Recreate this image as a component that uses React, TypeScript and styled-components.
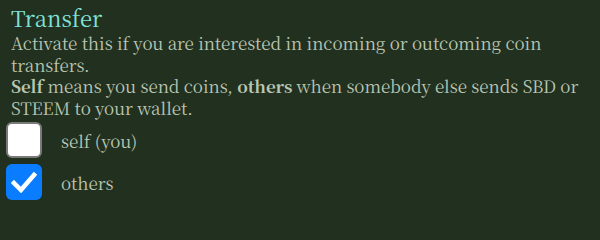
import styled, { createGlobalStyle } from "styled-components";

const GlobalStyle = createGlobalStyle`
  html, body {
    margin: 0;
    padding: 0;
    background: #22301f;
  }
`;

const options = [
  { id: "self", label: "self (you)", checked: false },
  { id: "others", label: "others", checked: true },
];

const CheckIcon = () => (
  <svg width="26" height="22" viewBox="0 0 26 22">
    <path
      d="M3 12 L10 19 L23 4"
      fill="none"
      stroke="#ffffff"
      strokeWidth="4.5"
      strokeLinecap="square"
    />
  </svg>
);

const App = () => {
  return (
    <Page>
      <GlobalStyle />
      <Title>Transfer</Title>
      <Description>
        Activate this if you are interested in incoming or outcoming coin
        transfers.
        <br />
        <b>Self</b> means you send coins, <b>others</b> when somebody else sends
        SBD or STEEM to your wallet.
      </Description>
      <OptionList>
        {options.map((option) => (
          <Option key={option.id}>
            <Box $checked={option.checked}>
              {option.checked && <CheckIcon />}
            </Box>
            <Label>{option.label}</Label>
          </Option>
        ))}
      </OptionList>
    </Page>
  );
};

export default App;

const Page = styled.div`
  width: 600px;
  height: 213px;
  box-sizing: border-box;
  padding: 4px 4px 0 11px;
  background: #22301f;
  font-family: "Noto Serif CJK SC", "Liberation Serif", serif;
  overflow: hidden;
`;

const Title = styled.div`
  color: #7fe3da;
  font-size: 22px;
  line-height: 28px;
`;

const Description = styled.div`
  width: 585px;
  color: #b9c6b3;
  font-size: 17px;
  letter-spacing: -0.05px;
  line-height: 21.5px;
  b {
    font-weight: 700;
  }
`;

const OptionList = styled.div`
  display: flex;
  flex-direction: column;
  gap: 6px;
  margin-top: 4px;
  margin-left: -5px;
`;

const Option = styled.div`
  display: flex;
  align-items: center;
`;

const Box = styled.div<{ $checked: boolean }>`
  width: 36px;
  height: 36px;
  box-sizing: border-box;
  border-radius: 6px;
  display: flex;
  justify-content: center;
  align-items: center;
  flex-shrink: 0;
  background: ${(p) => (p.$checked ? "#0a7cff" : "#ffffff")};
  border: ${(p) => (p.$checked ? "none" : "2px solid #7a7a7a")};
`;

const Label = styled.div`
  margin-left: 19px;
  color: #b9c6b3;
  font-size: 17px;
`;
